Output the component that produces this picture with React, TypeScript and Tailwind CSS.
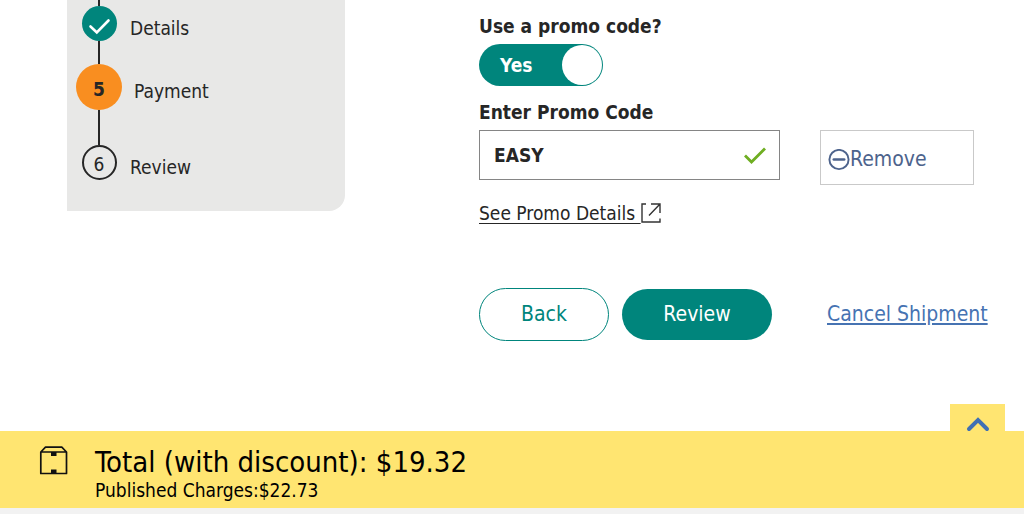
import { useState } from "react";

type Step = { number: number; label: string; status: "done" | "active" | "todo" };

const steps: Step[] = [
  { number: 4, label: "Details", status: "done" },
  { number: 5, label: "Payment", status: "active" },
  { number: 6, label: "Review", status: "todo" },
];

const StepMarker = ({ step }: { step: Step }) => {
  if (step.status === "done") {
    return (
      <span className="flex size-[35px] items-center justify-center rounded-full bg-[#00857c]">
        <svg viewBox="0 0 35 35" className="size-[35px]" fill="none" stroke="#fff" strokeWidth="2.6">
          <path d="M8.5 20.5 L14.8 26.5 L26.5 14.5" strokeLinecap="round" />
        </svg>
      </span>
    );
  }
  if (step.status === "active") {
    return (
      <span className="flex size-[46px] items-center justify-center rounded-full bg-[#f98e20] pt-1 text-[19px] font-bold">
        {step.number}
      </span>
    );
  }
  return (
    <span className="flex size-[35px] items-center justify-center rounded-full border-2 border-[#262626] pt-1 text-[19px]">
      {step.number}
    </span>
  );
};

// Vertical progress tracker
const Stepper = () => (
  <aside className="w-[278px] shrink-0 self-start rounded-br-2xl bg-[#e8e8e7] pb-[31px] pl-[9px]">
    <ol>
      {steps.map((step, index) => (
        <li key={step.number}>
          <div className="flex w-[46px] justify-center">
            <span
              className={
                index === 0
                  ? "h-[6px] w-[2px] bg-[#262626]"
                  : index === 1
                    ? "h-[23px] w-[2px] bg-[#262626]"
                    : "h-[35px] w-[2px] bg-[#262626]"
              }
            />
          </div>
          <div className={step.status === "active" ? "flex items-center gap-3" : "flex items-center gap-2"}>
            <span className="flex w-[46px] justify-center">
              <StepMarker step={step} />
            </span>
            <span className="pt-2 text-[19px] leading-6">{step.label}</span>
          </div>
        </li>
      ))}
    </ol>
  </aside>
);

const PromoForm = () => {
  const [usePromo, setUsePromo] = useState(true);
  const [code, setCode] = useState("EASY");

  return (
    <form className="min-w-0 flex-1 pt-3" onSubmit={(e) => e.preventDefault()}>
      <label htmlFor="use-promo" className="block text-[19px] leading-7 font-bold">
        Use a promo code?
      </label>
      <label
        htmlFor="use-promo"
        className="mt-1 flex h-[42px] w-[124px] cursor-pointer items-center justify-between rounded-full bg-[#00857c] pr-px pl-[21px] text-[19px] font-bold text-white"
      >
        <input
          id="use-promo"
          type="checkbox"
          role="switch"
          className="sr-only"
          checked={usePromo}
          onChange={(e) => setUsePromo(e.target.checked)}
        />
        {usePromo ? "Yes" : "No"}
        <span className="size-10 rounded-full bg-white" />
      </label>

      <label htmlFor="promo-code" className="mt-3 block text-[19px] leading-7 font-bold">
        Enter Promo Code
      </label>
      <div className="mt-1 flex items-start gap-10">
        <div className="flex h-[50px] w-[301px] items-center border border-[#858585] pr-3 pl-[14px]">
          <input
            id="promo-code"
            type="text"
            className="min-w-0 flex-1 text-[19px] font-bold outline-none"
            value={code}
            onChange={(e) => setCode(e.target.value)}
          />
          <svg viewBox="0 0 24 18" className="h-[18px] w-6" fill="none" stroke="#6fae22" strokeWidth="2.8">
            <path d="M2 9.5 L8.5 16 L22 2.5" />
          </svg>
        </div>
        <button
          type="button"
          className="flex h-[55px] w-[154px] items-center border border-[#c9c9c9] pt-1 pl-[7px] text-[21px] text-[#4d638c]"
          onClick={() => setCode("")}
        >
          <svg viewBox="0 0 22 22" className="size-[22px]" fill="none" stroke="currentColor" strokeWidth="1.9">
            <circle cx="11" cy="10.5" r="9.6" />
            <path d="M5.8 10.5 H16.2" strokeWidth="2.6" strokeLinecap="round" />
          </svg>
          Remove
        </button>
      </div>

      <a href="#promo-details" className="mt-4 flex w-fit items-center">
        <span className="text-[19px] leading-6 whitespace-pre underline underline-offset-3">See Promo Details </span>
        <svg viewBox="0 0 20 20" className="size-5" fill="none" stroke="#333" strokeWidth="1.4">
          <path d="M5 1 H1 V19 H19 V15.5" />
          <path d="M10 1 H19 V10 M19 1 L8 12.5" />
        </svg>
      </a>

      <div className="mt-[63px] flex items-center">
        <button
          type="button"
          className="h-[53px] w-[130px] rounded-full border border-[#00857c] text-[21px] text-[#00857c]"
        >
          Back
        </button>
        <button type="submit" className="ml-[13px] h-[51px] w-[150px] rounded-full bg-[#00857c] text-[21px] text-white">
          Review
        </button>
        <a href="#cancel" className="ml-[55px] text-[21px] text-[#4673b2] underline underline-offset-2">
          Cancel Shipment
        </a>
      </div>
    </form>
  );
};

const TotalBar = () => (
  <footer className="border-b-6 border-[#f2f2f2] text-black">
    <div className="flex justify-end pr-[19px]">
      <button type="button" aria-label="Show charges" className="flex h-[27px] w-[55px] items-end justify-center bg-[#ffe571]">
        <svg viewBox="0 0 22 14" className="h-[14px] w-[22px] overflow-visible" fill="none" stroke="#4070b4" strokeWidth="4">
          <path d="M2 12 L11 3 L20 12" strokeLinecap="round" />
        </svg>
      </button>
    </div>
    <div className="flex h-[77px] items-start bg-[#ffe571] pt-[15px] pl-[39px]">
      <svg viewBox="0 0 29 29" className="size-[29px]" fill="none" stroke="#111" strokeWidth="1.7">
        <path d="M1.8 6 H27.5 V27.5 H1.8 Z M1.8 6 L6.5 1.2 H22.8 L27.5 6" strokeLinejoin="round" />
        <path d="M12 6 H17.5 V10 H12 Z M12 23.5 H17.5 V27.5 H12 Z" fill="#111" stroke="none" />
      </svg>
      <div className="ml-[27px]">
        <p className="text-[29px] leading-8">Total (with discount): $19.32</p>
        <p className="text-[19px] leading-6">Published Charges:$22.73</p>
      </div>
    </div>
  </footer>
);

function App() {
  return (
    <div className="flex min-h-screen flex-col bg-white font-['DejaVu_Sans_Condensed','DejaVu_Sans',sans-serif] text-[#262626]">
      <main className="flex flex-1 gap-[134px] pl-[67px]">
        <Stepper />
        <PromoForm />
      </main>
      <TotalBar />
    </div>
  );
}

export default App;
